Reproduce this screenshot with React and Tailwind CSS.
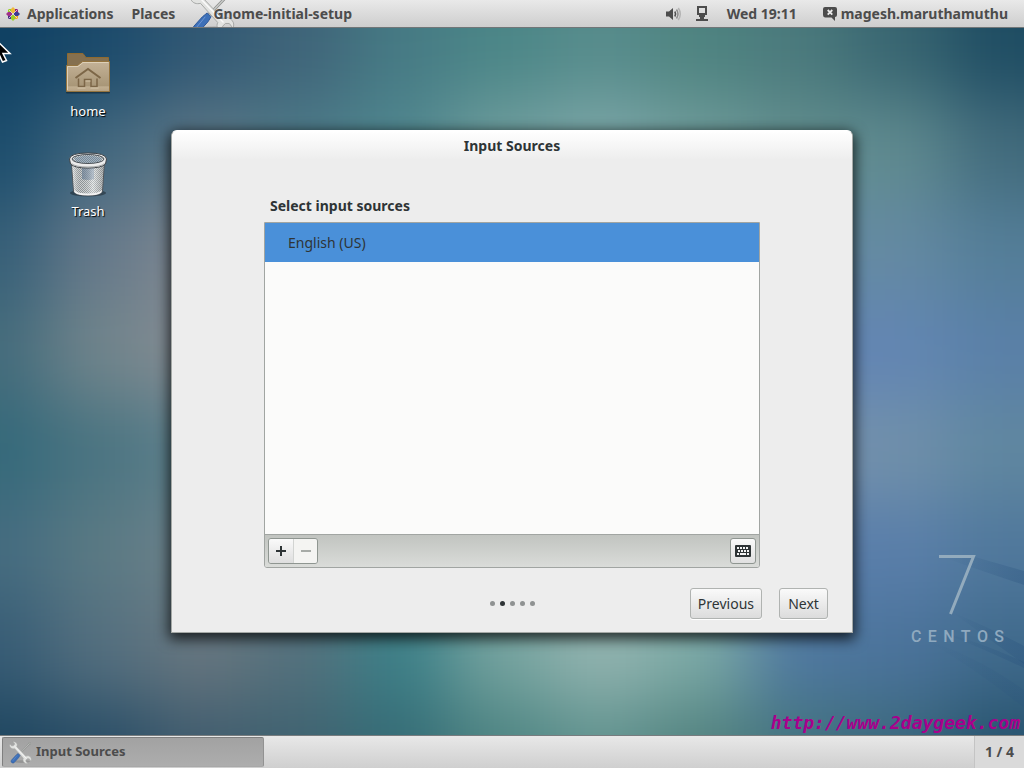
import React from "react";

const WALLPAPER = [
  ["#0f4062", "#1b4a6b", "#315874", "#3f6479", "#467a84", "#4b8687", "#578c8c", "#4e8380", "#4a797c", "#386571", "#1f4d63"],
  ["#1c4d6d", "#43687f", "#5d7786", "#4d7a88", "#50878f", "#709e9e", "#7ea8a9", "#709c9b", "#628e8e", "#5f8a8f", "#426b7c"],
  ["#365f78", "#66798a", "#808993", "#6c8792", "#50888f", "#7aa5a5", "#88aeae", "#7aa5a5", "#668ea4", "#6489a2", "#547e98"],
  ["#456c7c", "#71858c", "#878c93", "#75858f", "#50888f", "#7aa5a5", "#88aeae", "#7aa5a5", "#6282b3", "#6286b3", "#5a80a8"],
  ["#34697a", "#4a7481", "#5e808c", "#70858c", "#50888f", "#7aa5a5", "#88aeae", "#7aa5a5", "#7890ae", "#7090aa", "#6087a0"],
  ["#456c80", "#5b7a84", "#6e828b", "#667c86", "#47858b", "#7fa8a6", "#93b4b2", "#84acac", "#577aa9", "#5a7faa", "#50789c"],
  ["#375c75", "#546f7f", "#67767f", "#54717d", "#3c8088", "#75a39f", "#93b4b0", "#7caaa6", "#4f78a0", "#4b739b", "#406a8c"],
  ["#1e455f", "#294d66", "#405c6e", "#3f6270", "#356c76", "#4d8482", "#61938f", "#52827f", "#43737f", "#3b687d", "#27536e"],
];

const FONT = "font-['Noto_Sans','Open_Sans',sans-serif]";

function Wallpaper() {
  return (
    <svg
      className="absolute inset-0 -z-10 h-full w-full"
      viewBox="0 0 1024 768"
      preserveAspectRatio="none"
      aria-hidden="true"
    >
      <defs>
        <filter id="soften" x="-20%" y="-20%" width="140%" height="140%" colorInterpolationFilters="sRGB">
          <feGaussianBlur stdDeviation="34" />
        </filter>
        <linearGradient id="ray" x1="0" y1="0" x2="1" y2="0">
          <stop offset="0" stopColor="#264f7c" stopOpacity="0" />
          <stop offset="1" stopColor="#264f7c" stopOpacity="0.3" />
        </linearGradient>
      </defs>
      <rect width="1024" height="768" fill="#4b7283" />
      <g filter="url(#soften)">
        {WALLPAPER.map((row, r) =>
          row.map((fill, c) => {
            const left = c === 0 ? -150 : c * 100 - 50;
            const right = c === row.length - 1 ? 1180 : c * 100 + 51;
            const top = r === 0 ? -150 : r * 100;
            const bottom = r === WALLPAPER.length - 1 ? 920 : r * 100 + 101;
            return <rect key={`${r}-${c}`} x={left} y={top} width={right - left} height={bottom - top} fill={fill} />;
          })
        )}
      </g>
      <path d="M945 558 L975 557 L1024 571 V585 Q985 572 945 558Z" fill="url(#ray)" />
      <path d="M952 612 Q990 628 1024 646 V664 Q990 640 952 612Z" fill="url(#ray)" />
      <path d="M940 632 Q975 645 1024 668 V662 Q975 640 940 632Z" fill="url(#ray)" />
      <path d="M925 640 Q975 668 1024 708 V690 Q975 655 925 640Z" fill="url(#ray)" opacity="0.5" />
    </svg>
  );
}

function CentosLogo() {
  return (
    <svg className="size-[14px] shrink-0" viewBox="0 0 28 28" aria-hidden="true">
      <rect x="4" y="4" width="9.500" height="9.500" fill="#9ccd2a" />
      <rect x="14.500" y="4" width="9.500" height="9.500" fill="#932279" />
      <rect x="4" y="14.500" width="9.500" height="9.500" fill="#4a2d86" />
      <rect x="14.500" y="14.500" width="9.500" height="9.500" fill="#efa724" />
      <path d="M14 0l4 4v6L14 13 10 10V4z" fill="#efb93a" />
      <path d="M28 14l-4 4h-6L15 14l3-4h6z" fill="#3b3a92" />
      <path d="M14 28l-4-4v-6l4-3 4 3v6z" fill="#9ccd2a" />
      <path d="M0 14l4-4h6l3 4-3 4H4z" fill="#a0308a" />
      <path d="M5 5l18 18M23 5L5 23" stroke="#f1eef0" strokeWidth="1.500" />
    </svg>
  );
}

function ToolsIcon({ className }) {
  return (
    <svg className={className} viewBox="0 0 48 48" fill="none" aria-hidden="true">
      <ellipse cx="26" cy="43" rx="18" ry="3" fill="#000" opacity="0.13" />
      <path d="M43 5L18 31" stroke="#8b8d8b" strokeWidth="3" />
      <path d="M43 5L18 31" stroke="#c9cbc9" strokeWidth="1.500" />
      <path d="M41 4l4-1-1 5z" fill="#babdb6" stroke="#8b8d8b" strokeWidth="0.800" />
      <path
        d="M8 2c4-1 8 1 9 5 0 2 0 3-1 5l19 20c4-2 8-1 10 2 2 2 2 5 1 8l-4-5-4 0-3 3 1 4 4 3c-4 1-8-1-10-4-1-3-1-5 0-7L12 16c-4 1-8 0-10-4-1-2-1-4 0-6l3 4 4 0 3-3-1-3z"
        fill="#e2e3e1"
        stroke="#a4a6a4"
        strokeWidth="1"
      />
      <path d="M12 11l24 25" stroke="#fafafa" strokeWidth="1.500" />
      <path d="M19 26l4 4-3 5-9 10c-3 3-9-1-6-5l9-10z" fill="#3d70b8" stroke="#2a5597" strokeWidth="1" />
      <path d="M17 30L8 41" stroke="#6f98d3" strokeWidth="1" />
    </svg>
  );
}

function VolumeIcon() {
  return (
    <svg className="h-[14px] w-[16px]" viewBox="0 0 16 14" fill="none" aria-hidden="true">
      <path d="M0 4.500h3L7 1v12L3 9.500H0z" fill="#4c4c4c" />
      <path d="M8.800 4.500q1.600 2.500 0 5" stroke="#4c4c4c" strokeWidth="1.500" />
      <path d="M10.500 2.500q3 4.500 0 9" stroke="#8d8d8d" strokeWidth="1.500" />
      <path d="M12.300 1q4 6 0 12" stroke="#b4b4b4" strokeWidth="1.500" />
    </svg>
  );
}

function NetworkIcon() {
  return (
    <svg className="h-[15px] w-[13px]" viewBox="0 0 13 15" aria-hidden="true">
      <path d="M1 0h10v9H1zM3 2v5h6V2z" fill="#4c4c4c" fillRule="evenodd" />
      <path d="M3 9h6v2H3zM4 11h4v2H4zM0 13h12v2H0z" fill="#4c4c4c" />
    </svg>
  );
}

function ChatIcon() {
  return (
    <svg className="h-[14px] w-[14px]" viewBox="0 0 14 14" aria-hidden="true">
      <path d="M2 0h10q2 0 2 2v6q0 2-2 2v4L8.500 10.500H2Q0 10 0 8V2q0-2 2-2z" fill="#4c4c4c" />
      <path d="M4.700 3l4.600 4.600M9.300 3L4.700 7.600" stroke="#ececec" strokeWidth="1.800" />
    </svg>
  );
}

function FolderIcon() {
  return (
    <svg className="h-[44px] w-[46px]" viewBox="0 0 46 44" aria-hidden="true">
      <defs>
        <linearGradient id="folderFront" x1="0" y1="0" x2="0" y2="1">
          <stop offset="0" stopColor="#c4b297" />
          <stop offset="0.800" stopColor="#a99778" />
          <stop offset="0.850" stopColor="#c0ae91" />
          <stop offset="1" stopColor="#b5a284" />
        </linearGradient>
      </defs>
      <rect x="1" y="38" width="44" height="2.500" rx="1" fill="#000" opacity="0.35" />
      <path d="M2.500 35V.5H18l3 4h22.500V35z" fill="#85704f" stroke="#8f6a2f" />
      <path d="M1.500 38.500V12.500H12.500l5-4h27v30z" fill="url(#folderFront)" stroke="#94743f" />
      <path d="M2.500 37V13.500H13l5-4h25.500" fill="none" stroke="#ddd0b8" />
      <path d="M10.500 25L23 16l12.500 9" fill="none" stroke="#7c6647" strokeWidth="2" />
      <path d="M13.500 25.500v8h6v-7h6.500v7h6v-8" fill="none" stroke="#7c6647" strokeWidth="1.500" />
      <path d="M12.500 35h8m5 0h8M20.500 28h5" fill="none" stroke="#d5c6aa" />
    </svg>
  );
}

function TrashIcon() {
  return (
    <svg className="h-[45px] w-[40px]" viewBox="0 0 40 45" aria-hidden="true">
      <defs>
        <pattern id="mesh" width="2" height="2" patternUnits="userSpaceOnUse">
          <rect width="2" height="2" fill="#dcdfe0" />
          <rect width="1" height="1" fill="#8f9799" />
          <rect x="1" y="1" width="1" height="1" fill="#8f9799" />
        </pattern>
        <linearGradient id="binShade" x1="0" y1="0" x2="1" y2="0">
          <stop offset="0" stopColor="#fff" stopOpacity="0.600" />
          <stop offset="0.300" stopColor="#777" stopOpacity="0.150" />
          <stop offset="0.650" stopColor="#fff" stopOpacity="0.400" />
          <stop offset="1" stopColor="#777" stopOpacity="0.400" />
        </linearGradient>
      </defs>
      <ellipse cx="20" cy="41" rx="18" ry="3.500" fill="#000" opacity="0.350" />
      <path d="M3.500 10l2 29q1 4.500 14.500 4.500T34.500 39l2-29z" fill="url(#mesh)" stroke="#50555a" />
      <path d="M14 14h12v13q-6 2-12 0z" fill="#587592" opacity="0.600" />
      <path d="M4 12l2 27q1 4 14 4t14-4l2-27z" fill="url(#binShade)" />
      <path d="M6 38q3 3.500 14 3.500T34 38l-.5 2.500q-3 3-13.500 3T6.500 40.500z" fill="#f2f2f2" />
      <path d="M1.500 7Q2 1 20 1t18.500 6l-1 5q-4 4-17.500 4T2.500 12z" fill="#ececec" stroke="#3d4246" />
      <ellipse cx="20" cy="7" rx="16" ry="4.500" fill="url(#mesh)" stroke="#4a5056" />
      <path d="M6 6q14-5 28 0l-2 3.500q-12 3-24 0z" fill="#5f7d96" opacity="0.450" />
      <path d="M3.500 11.500Q7 15 20 15t16.500-3.500" fill="none" stroke="#a6a9aa" />
    </svg>
  );
}

function KeyboardIcon() {
  return (
    <svg className="h-3 w-4" viewBox="0 0 16 12" aria-hidden="true">
      <rect width="16" height="12" rx="1" fill="#2e3436" />
      <path
        d="M2 2h2v2H2zm3 0h2v2H5zm3 0h2v2H8zm3 0h2v2h-2zM3 5h2v2H3zm3 0h2v2H6zm3 0h2v2H9zm3 0h2v2h-2zM2 8h2v2H2zm3 0h6v2H5zm7 0h2v2h-2z"
        fill="#f4f4f4"
      />
    </svg>
  );
}

function DesktopIcon({ label, children }) {
  return (
    <a
      href="#"
      className="flex h-[100px] flex-col items-center gap-1 text-[13px] leading-5 text-white [text-shadow:1px_1px_1px_#000]"
    >
      <span className="flex h-[49px] items-end">{children}</span>
      {label}
    </a>
  );
}

function TopBar() {
  return (
    <header className="flex h-7 items-center justify-between border-b border-[#717678] bg-linear-to-b from-[#e9e9e9] to-[#cecece] pr-4 pl-[6px] text-[14px] font-bold text-[#4c4c4c] [text-shadow:0_1px_0_#f4f4f4]">
      <nav className="flex h-full items-center gap-4">
        <button type="button" className="flex items-center gap-[7px] pr-[2px]">
          <CentosLogo />
          Applications
        </button>
        <button type="button">Places</button>
        <button type="button" className="relative flex h-full items-center overflow-hidden pl-[22px]">
          <ToolsIcon className="absolute -top-[12px] -left-[2px] size-[46px]" />
          <span className="relative">Gnome-initial-setup</span>
        </button>
      </nav>
      <div className="flex items-center gap-[14px]">
        <button type="button" aria-label="Volume">
          <VolumeIcon />
        </button>
        <button type="button" aria-label="Network">
          <NetworkIcon />
        </button>
        <button type="button" className="px-1">
          Wed 19:11
        </button>
        <button type="button" className="flex items-center gap-1 pl-2">
          <ChatIcon />
          magesh.maruthamuthu
        </button>
      </div>
    </header>
  );
}

const BUTTON =
  "h-[31px] min-w-[49px] rounded-[3px] border border-[#b0b3b1] bg-linear-to-b from-[#fafafa] to-[#dcdcdc] px-[7px] text-[14px] shadow-[0_1px_0_#fff]";

function SetupWindow() {
  return (
    <section
      aria-labelledby="window-title"
      className="w-full max-w-[682px] rounded-t-[6px] border border-[#a5a9a6] border-t-white bg-[#ededed] text-[#2e3436] shadow-[0_4px_14px_2px_rgba(0,0,0,0.75)]"
    >
      <h1
        id="window-title"
        className="flex h-[29px] items-center justify-center rounded-t-[5px] bg-linear-to-b from-white to-[#ededed] text-[14px] font-bold"
      >
        Input Sources
      </h1>
      <div className="px-[92px] pt-9">
        <h2 id="sources-label" className="mb-[6px] px-[6px] text-[14px] leading-5 font-bold">
          Select input sources
        </h2>
        <div className="rounded-b-[3px] border border-[#a1a5a2]">
          <ul role="listbox" aria-labelledby="sources-label" className="min-h-[311px] bg-[#fbfbfa]">
            <li
              role="option"
              aria-selected="true"
              tabIndex={0}
              className="flex h-[39px] items-center bg-[#4a90d9] px-[23px] text-[14px]"
            >
              English (US)
            </li>
          </ul>
          <div className="flex items-center justify-between rounded-b-[2px] border-t border-[#a1a5a2] bg-linear-to-b from-[#c1c4c0] to-[#dadcd9] p-[3px]">
            <div className="flex h-[26px] overflow-hidden rounded-[3px] border border-[#8f9691]">
              <button
                type="button"
                aria-label="Add"
                className="flex w-6 items-center justify-center bg-linear-to-b from-[#fafafa] to-[#dedede]"
              >
                <svg className="size-[10px]" viewBox="0 0 10 10" aria-hidden="true">
                  <path d="M4 0h2v4h4v2H6v4H4V6H0V4h4z" fill="#2e3436" />
                </svg>
              </button>
              <button
                type="button"
                aria-label="Remove"
                disabled
                className="flex w-6 items-center justify-center border-l border-[#d2d4d2] bg-[#f4f4f2]"
              >
                <svg className="size-[10px]" viewBox="0 0 10 10" aria-hidden="true">
                  <path d="M0 4h10v2H0z" fill="#a7aba7" />
                </svg>
              </button>
            </div>
            <button
              type="button"
              aria-label="Show keyboard layout"
              className="flex h-[26px] w-[26px] items-center justify-center rounded-[3px] border border-[#8f9691] bg-linear-to-b from-[#fafafa] to-[#e0e0e0]"
            >
              <KeyboardIcon />
            </button>
          </div>
        </div>
      </div>
      <footer className="grid grid-cols-[1fr_auto_1fr] items-center px-6 pt-5 pb-[13px]">
        <ol aria-label="Step 2 of 5" className="col-start-2 flex gap-[5px]">
          {[1, 2, 3, 4, 5].map((step) => (
            <li
              key={step}
              className={step === 2 ? "size-[5px] rounded-full bg-[#2e3436]" : "size-[5px] rounded-full bg-[#8f9292]"}
            />
          ))}
        </ol>
        <div className="flex justify-end gap-[17px]">
          <button type="button" className={BUTTON}>
            Previous
          </button>
          <button type="button" className={BUTTON}>
            Next
          </button>
        </div>
      </footer>
    </section>
  );
}

function CentosMark() {
  return (
    <div
      className="absolute right-5 bottom-[88px] flex w-[93px] flex-col items-center gap-3 text-[16px] leading-5 text-[#8fa9bf]"
      aria-label="CentOS 7"
    >
      <svg className="h-[60px] w-[37px]" viewBox="0 0 37 60" aria-hidden="true">
        <path d="M0 1.500h34.500L11.500 59" fill="none" stroke="#93abbd" strokeWidth="3" />
      </svg>
      <div className="flex w-full justify-between font-['Roboto',sans-serif] font-medium">
        {["C", "E", "N", "T", "O", "S"].map((letter) => (
          <span key={letter}>{letter}</span>
        ))}
      </div>
    </div>
  );
}

function BottomBar() {
  return (
    <footer className="flex h-[33px] items-stretch justify-between border-t border-[#777c7e] bg-linear-to-b from-[#e8e8e8] to-[#cfcfcf] text-[13px] font-bold text-[#4c4c4c]">
      <button
        type="button"
        className="mt-px mb-px ml-[2px] flex w-[262px] items-center gap-1 rounded-[2px] border border-[#7f7f7f] border-r-[#929292] border-b-[#a8a8a8] bg-linear-to-b from-[#a2a2a2] to-[#adadad] px-[6px]"
      >
        <ToolsIcon className="size-[23px]" />
        Input Sources
      </button>
      <button type="button" className="border-l border-[#c4c4c4] bg-[#dadada] px-[10px] pb-[2px] text-[14px]">
        1 / 4
      </button>
    </footer>
  );
}

export default function App() {
  return (
    <div className={`relative isolate flex min-h-screen flex-col overflow-hidden ${FONT}`}>
      <Wallpaper />
      <TopBar />
      <main className="relative flex flex-1 items-center justify-center">
        <div className="absolute top-[20px] left-[60px] flex w-14 flex-col">
          <DesktopIcon label="home">
            <FolderIcon />
          </DesktopIcon>
          <DesktopIcon label="Trash">
            <TrashIcon />
          </DesktopIcon>
        </div>
        <svg className="absolute top-[9px] -left-[7px] h-[28px] w-[20px]" viewBox="0 0 20 28" aria-hidden="true">
          <path d="M1 1v21l5-4.500L9.500 25l4-1.500L10 16.500h7z" fill="#000" stroke="#fff" strokeWidth="1.500" />
        </svg>
        <SetupWindow />
        <CentosMark />
        <a
          href="http://www.2daygeek.com"
          className="absolute right-1 bottom-0 font-['DejaVu_Sans_Mono',monospace] text-[18px] leading-6 font-bold text-[#a8008c] italic"
        >
          http://www.2daygeek.com
        </a>
      </main>
      <BottomBar />
    </div>
  );
}
